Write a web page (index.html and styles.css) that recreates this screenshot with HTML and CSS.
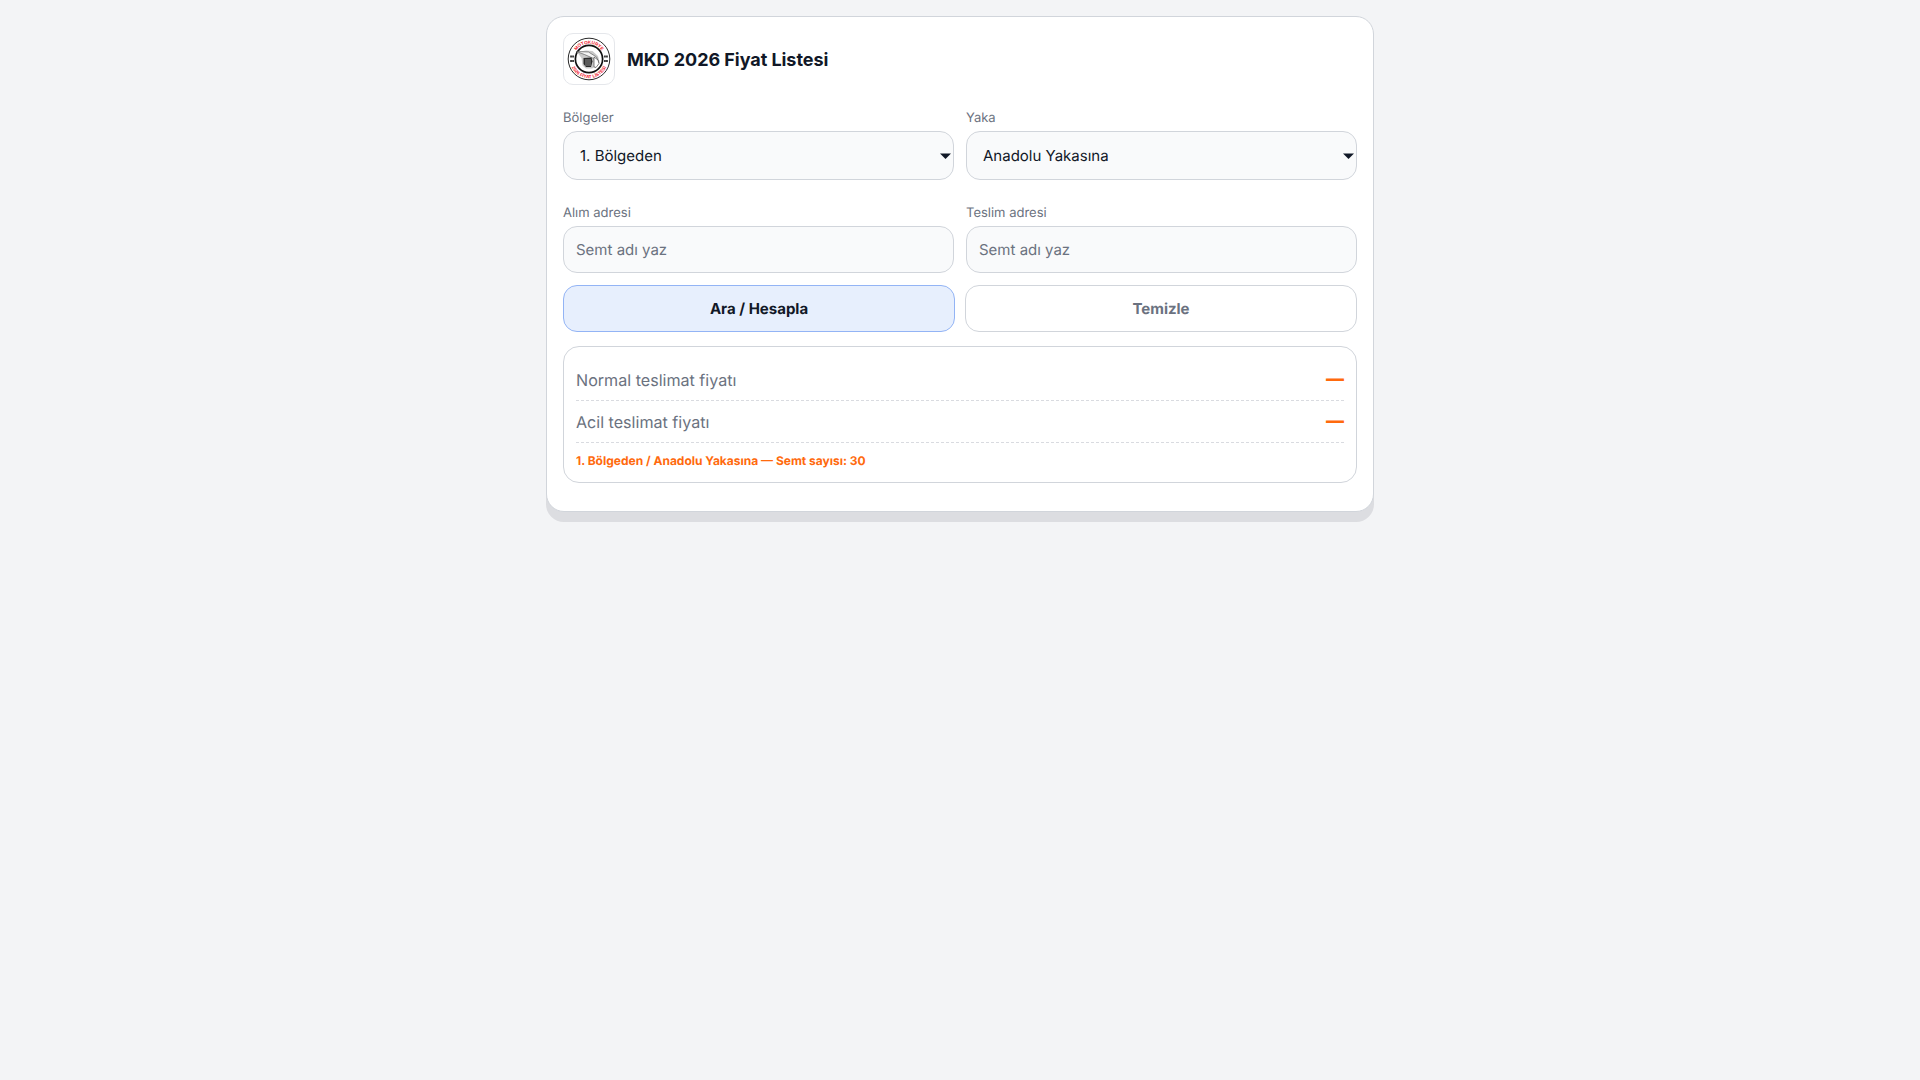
FILE: index.html
```html
<!DOCTYPE html>
<html lang="tr">
<head>
<meta charset="utf-8">
<title>MKD 2026 Fiyat Listesi</title>
<link rel="stylesheet" href="styles.css">
</head>
<body>
<main class="card">
  <header class="head">
    <div class="logo">
      <svg viewBox="0 0 44 44" width="44" height="44">
        <defs>
          <path id="arcTop" d="M6.800 22a15.200 15.200 0 0 1 30.400 0"/>
          <path id="arcBot" d="M2.900 22a19.100 19.100 0 0 0 38.200 0"/>
        </defs>
        <circle cx="22" cy="22" r="20.800" fill="#fff" stroke="#111" stroke-width=".9"/>
        <circle cx="22" cy="22" r="13.600" fill="#fff" stroke="#111" stroke-width="1.700"/>
        <path d="M10 15l9-1.500 6.500.5 5.500 5 1.500 5.500-2.500 4.500-5 2.500h-6l-3.500-3-1-7.500z" fill="#c9c9c9"/>
        <path d="M9.500 14.500l12 .5 8 5 2.500 6-6.500-5-8-3.500z" fill="#f4f4f4" stroke="#333" stroke-width=".5"/>
        <path d="M16.500 21l8-.5 1 4-1.500 5.500h-5l-2.500-3z" fill="#2a2a2a"/>
        <path d="M19 22v7M21 22v7M23 22v7" stroke="#b5b5b5" stroke-width=".7"/>
        <path d="M27 20l4 3 1 3.500-3 4-2-.5z" fill="#fff" stroke="#333" stroke-width=".6"/>
        <text class="logo-t"><textPath href="#arcTop" startOffset="50%" text-anchor="middle">MOTOKURYE</textPath></text>
        <text class="logo-t"><textPath href="#arcBot" startOffset="50%" text-anchor="middle">2026 FİYAT LİSTESİ</textPath></text>
        <rect x="3.300" y="18.500" width="1.500" height="2" fill="#111"/><rect x="5.300" y="18.500" width="1.500" height="2" fill="#111"/>
        <rect x="3.300" y="23" width="1.500" height="2" fill="#111"/><rect x="5.300" y="23" width="1.500" height="2" fill="#111"/>
        <rect x="37.200" y="18.500" width="1.500" height="2" fill="#111"/><rect x="39.200" y="18.500" width="1.500" height="2" fill="#111"/>
        <rect x="37.200" y="23" width="1.500" height="2" fill="#111"/><rect x="39.200" y="23" width="1.500" height="2" fill="#111"/>
      </svg>
    </div>
    <h1 class="title">MKD 2026 Fiyat Listesi</h1>
  </header>

  <div class="row row-sel">
    <label class="field"><span class="lab">Bölgeler</span>
      <select class="ctl sel"><option>1. Bölgeden</option></select></label>
    <label class="field"><span class="lab">Yaka</span>
      <select class="ctl sel"><option>Anadolu Yakasına</option></select></label>
  </div>

  <div class="row row-inp">
    <label class="field"><span class="lab">Alım adresi</span>
      <input class="ctl inp" placeholder="Semt adı yaz"></label>
    <label class="field"><span class="lab">Teslim adresi</span>
      <input class="ctl inp" placeholder="Semt adı yaz"></label>
  </div>

  <div class="btns">
    <button class="btn primary">Ara / Hesapla</button>
    <button class="btn ghost">Temizle</button>
  </div>

  <section class="result">
    <div class="line"><span>Normal teslimat fiyatı</span><b class="dash">—</b></div>
    <div class="line"><span>Acil teslimat fiyatı</span><b class="dash">—</b></div>
    <p class="note">1. Bölgeden / Anadolu Yakasına — Semt sayısı: 30</p>
  </section>
</main>
</body>
</html>
```
FILE: styles.css
```css
* { box-sizing: border-box; }
html, body { margin: 0; }
body {
  background: #f3f4f6;
  font-family: Inter, "Noto Sans", sans-serif;
  color: #111827;
  padding: 16px 0;
  text-rendering: geometricPrecision;
}
.card {
  width: 828px;
  margin: 0 auto;
  background: #fff;
  border: 1px solid #d1d5db;
  border-radius: 18px;
  padding: 16px;
  box-shadow: 0 10px 0 rgba(17, 24, 39, .1);
  height: 496px;
}
.head { display: flex; align-items: center; gap: 12px; margin-bottom: 25px; }
.logo {
  width: 52px; height: 52px;
  border: 1px solid #e5e7eb;
  border-radius: 10px;
  display: flex; align-items: center; justify-content: center;
  background: #fff;
}
.logo-t { font: 700 4.600px "Liberation Sans", sans-serif; fill: #f0162b; }
.title { margin: 0; font-size: 18px; font-weight: 700; color: #111827; letter-spacing: -.05px; text-rendering: auto; }
.row { display: grid; grid-template-columns: 1fr 1fr; gap: 12px; }
.row-sel { margin-bottom: 25px; }
.row-inp { margin-bottom: 12px; }
.field { display: block; min-width: 0; }
.lab { display: block; font-size: 13px; line-height: 16px; color: #6b7280; margin-bottom: 5px; }
.ctl {
  display: block;
  width: 100%;
  border: 1px solid #d1d5db;
  border-radius: 14px;
  background-color: #f9fafb;
  font-family: inherit;
  font-size: 15px;
  color: #111827;
  text-rendering: geometricPrecision;
}
.sel {
  height: 49px;
  padding: 0 16px;
  appearance: none;
  background-image: url("data:image/svg+xml,%3Csvg xmlns='http://www.w3.org/2000/svg' width='11' height='6'%3E%3Cpath d='M0 .5h11L5.500 6z' fill='%23111827'/%3E%3C/svg%3E");
  background-repeat: no-repeat;
  background-position: right 2px center;
}
.inp { height: 47px; padding: 0 12px; outline: none; }
.inp::placeholder { color: #6b7280; opacity: 1; }
.btns { display: grid; grid-template-columns: 1fr 1fr; gap: 10px; margin-bottom: 14px; }
.btn {
  height: 47px;
  border-radius: 14px;
  font-family: inherit;
  font-size: 15px;
  font-weight: 750;
  text-rendering: geometricPrecision;
}
.primary { background: #e7effd; border: 1px solid #93b4f5; color: #111827; }
.ghost { background: #fff; border: 1px solid #d1d5db; color: #6b7280; }
.result {
  border: 1px solid #d1d5db;
  border-radius: 16px;
  padding: 12px 12px 10px;
  height: 137px;
}
.line {
  display: flex; justify-content: space-between; align-items: center;
  height: 42px;
  border-bottom: 1px dashed #d9dbe0;
  font-size: 16.100px;
  color: #6b7280;
}
.dash { color: #ff6a0d; font-size: 18px; font-weight: 800; }
.note { margin: 10px 0 0; font-size: 12px; line-height: 16px; font-weight: 650; color: #ff6a0d; }
```
